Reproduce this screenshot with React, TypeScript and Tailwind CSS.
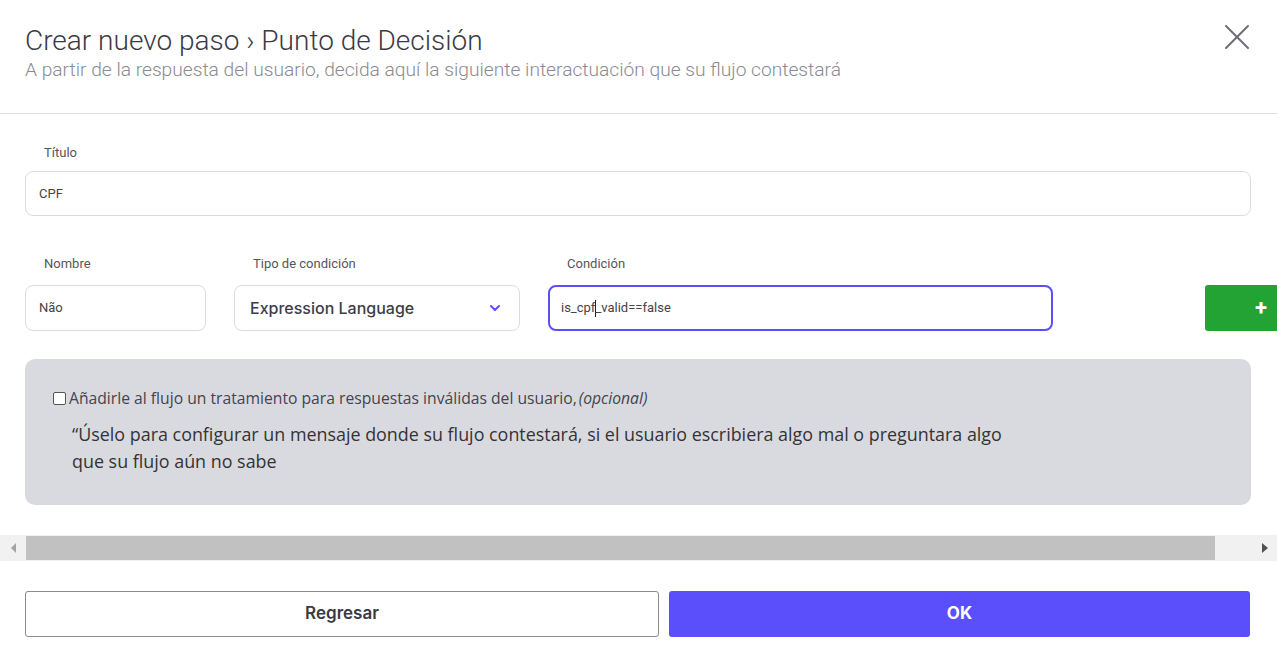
import { ChevronDown, X } from 'lucide-react';

const Field = ({ label, children, className, gap = 'mb-[13px]' }: { label: string; children: React.ReactNode; className?: string; gap?: string }) => (
  <div className={className}>
    <div className={`pl-[19px] text-[13px] leading-[16px] text-[#555560] ${gap}`}>{label}</div>
    {children}
  </div>
);

export default function App() {
  return (
    <div className="w-[1277px] h-[658px] bg-white overflow-hidden text-[#3b3b45]" style={{ fontFamily: 'Roboto, "Noto Sans", sans-serif' }}>
      {/* header */}
      <div className="relative h-[114px] border-b border-[#dcdcdc] px-[25px] pt-[24px]">
        <h1 className="text-[28px] leading-[34px] font-light text-[#3a3a44]">Crear nuevo paso › Punto de Decisión</h1>
        <p className="mt-[1px] text-[19.2px] leading-[22px] font-light text-[#8a8a92]">
          A partir de la respuesta del usuario, decida aquí la siguiente interactuación que su flujo contestará
        </p>
        <button className="absolute right-[18px] top-[15px] text-[#6e6e78]">
          <X size={44} strokeWidth={1.1} />
        </button>
      </div>

      {/* body */}
      <div className="overflow-hidden">
        <div className="w-[1300px] pl-[25px] pt-[31px]">
          <Field label="Título" className="w-[1226px]" gap="mb-[10px]">
            <div className="h-[45px] rounded-[8px] border border-[#dcdcdc] flex items-center px-[13px] text-[13px] text-[#444]">CPF</div>
          </Field>

          <div className="flex items-end mt-[40px]">
            <Field label="Nombre" className="w-[181px]">
              <div className="h-[46px] rounded-[8px] border border-[#dcdcdc] flex items-center px-[13px] text-[13px] text-[#444]">Não</div>
            </Field>
            <Field label="Tipo de condición" className="w-[286px] ml-[28px]">
              <div className="h-[46px] rounded-[8px] border border-[#dcdcdc] flex items-center justify-between pl-[15px] pr-[16px] text-[16px] font-medium text-[#3d3d47]" style={{ fontFamily: 'Inter, sans-serif' }}>
                <span>Expression Language</span>
                <ChevronDown size={16} strokeWidth={3} className="text-[#5a4ffa]" />
              </div>
            </Field>
            <Field label="Condición" className="w-[505px] ml-[28px]">
              <div className="h-[46px] rounded-[8px] border-2 border-[#5a4ffa] flex items-center px-[11px] text-[13px] text-[#444]">
                is_cpf<span className="inline-block w-[1px] h-[17px] bg-[#222] -mr-[1px]"></span>_valid==false
              </div>
            </Field>
            <div className="ml-[152px] w-[90px] h-[46px] rounded-[3px] bg-[#22a334] flex items-center pl-[50px] text-white text-[22px] font-bold leading-none">+</div>
          </div>

          <div className="mt-[28px] w-[1226px] h-[146px] rounded-[10px] bg-[#d9dae0] pl-[28px] pt-[29px]">
            <label className="flex items-center text-[15.7px] text-[#44444c] leading-[20px]" style={{ fontFamily: '"Open Sans", sans-serif' }}>
              <span className="w-[13px] h-[13px] rounded-[2px] border border-[#555] bg-white mr-[3px]"></span>
              Añadirle al flujo un tratamiento para respuestas inválidas del usuario,<i className="ml-[2px]">(opcional)</i>
            </label>
            <p className="mt-[13px] ml-[19px] max-w-[940px] text-[17.9px] leading-[27px] text-[#333]" style={{ fontFamily: '"Open Sans", sans-serif' }}>
              “Úselo para configurar un mensaje donde su flujo contestará, si el usuario escribiera algo mal o preguntara algo que su flujo aún no sabe
            </p>
          </div>
        </div>
      </div>

      {/* scrollbar */}
      <div className="mt-[30px] h-[26px] bg-[#f1f1f1] flex items-center">
        <div className="w-[26px] flex justify-center">
          <div className="w-0 h-0 border-y-[5px] border-y-transparent border-r-[5px] border-r-[#a3a3a3]"></div>
        </div>
        <div className="w-[1189px] h-[24px] bg-[#c1c1c1]"></div>
        <div className="flex-1 flex justify-end pr-[9px]">
          <div className="w-0 h-0 border-y-[5px] border-y-transparent border-l-[6px] border-l-[#505050]"></div>
        </div>
      </div>

      {/* footer */}
      <div className="flex gap-[10px] pl-[25px] pr-[27px] mt-[30px]" style={{ fontFamily: 'Inter, sans-serif' }}>
        <button className="w-[634px] h-[46px] rounded-[3px] border border-[#8a8a8f] bg-white text-[17px] font-semibold text-[#3a3a44]">Regresar</button>
        <button className="flex-1 h-[46px] rounded-[3px] bg-[#5a4ffb] text-[17px] font-bold text-white">OK</button>
      </div>
    </div>
  );
}
